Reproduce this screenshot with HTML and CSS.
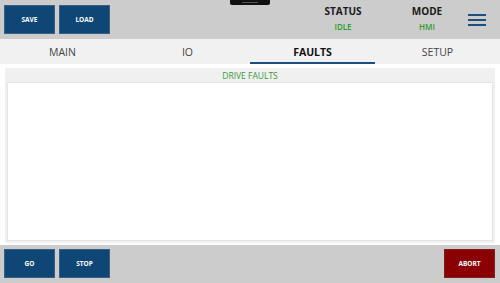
FILE: index.html
```html
<!DOCTYPE html>
<html>
<head>
<meta charset="utf-8">
<link rel="stylesheet" href="styles.css">
</head>
<body>
<div class="app">
  <div class="handle"><span></span></div>
  <header class="topbar">
    <button class="btn blue">SAVE</button>
    <button class="btn blue">LOAD</button>
    <div class="spacer"></div>
    <div class="stat status"><div class="label">STATUS</div><div class="value">IDLE</div></div>
    <div class="stat mode"><div class="label">MODE</div><div class="value">HMI</div></div>
    <div class="menu">
      <svg width="18" height="12" viewBox="0 0 18 12"><rect x="0" y="0" width="18" height="2" fill="#1d4f7c"/><rect x="0" y="5" width="18" height="2" fill="#1d4f7c"/><rect x="0" y="10" width="18" height="2" fill="#1d4f7c"/></svg>
    </div>
  </header>
  <nav class="tabs">
    <div class="tab">MAIN</div>
    <div class="tab">IO</div>
    <div class="tab active">FAULTS</div>
    <div class="tab">SETUP</div>
  </nav>
  <main class="content">
    <section class="panel">
      <div class="panel-head">DRIVE FAULTS</div>
      <div class="panel-body"></div>
    </section>
  </main>
  <footer class="bottombar">
    <button class="btn blue">GO</button>
    <button class="btn blue">STOP</button>
    <div class="spacer"></div>
    <button class="btn red">ABORT</button>
  </footer>
</div>
</body>
</html>
```
FILE: styles.css
```css
html, body { margin: 0; padding: 0; }
body { font-family: "Open Sans", "Noto Sans", sans-serif; background: #fff; }
.app { width: 500px; height: 283px; display: flex; flex-direction: column; position: relative; overflow: hidden; }
.handle { position: absolute; left: 230px; top: 0; width: 40px; height: 5px; background: #111; border-radius: 0 0 2px 2px; display: flex; align-items: center; justify-content: center; }
.handle span { display: block; width: 16px; height: 1px; background: #555; }
.topbar { height: 39px; box-sizing: border-box; background: #cccccc; display: flex; align-items: flex-start; padding: 5px 4px 0 4px; gap: 4px; }
.spacer { flex: 1; }
.btn { width: 51px; height: 29px; border: 1px solid #3a5f80; padding: 0; font-family: inherit; font-size: 6.5px; font-weight: 700; color: #fff; cursor: pointer; box-sizing: border-box; }
.btn.blue { background: #0e4776; }
.btn.red { background: #8b0000; border-color: #7a2020; }
.stat { display: flex; flex-direction: column; align-items: center; width: 60px; }
.stat .label { font-size: 10px; font-weight: 700; color: #1a1a1a; line-height: 12px; }
.stat .value { font-size: 8px; font-weight: 600; color: #2f9a2f; line-height: 10px; margin-top: 5px; }
.status { margin-right: 20px; }
.menu { width: 32px; display: flex; justify-content: center; padding-top: 9px; margin-right: 3px; }
.tabs { height: 25px; background: #f1f1f1; display: grid; grid-template-columns: repeat(4, 1fr); }
.tab { display: flex; align-items: center; justify-content: center; font-size: 10.5px; color: #444; box-sizing: border-box; border-bottom: 2px solid transparent; padding-top: 3px; }
.tab.active { font-weight: 700; color: #111; border-bottom-color: #1d4f7c; }
.content { flex: 1; background: #fff; padding: 4px 5px 2px 5px; display: flex; }
.panel { flex: 1; background: #f0f0f0; display: flex; flex-direction: column; padding: 0 2px 2px 2px; }
.panel-head { height: 14px; display: flex; align-items: center; justify-content: center; font-size: 8.5px; color: #3a9a3a; }
.panel-body { flex: 1; background: #fff; border: 1px solid #e4e4e4; }
.bottombar { height: 38px; box-sizing: border-box; background: #cccccc; display: flex; align-items: flex-start; padding: 4px 5px 0 4px; gap: 4px; }
```
